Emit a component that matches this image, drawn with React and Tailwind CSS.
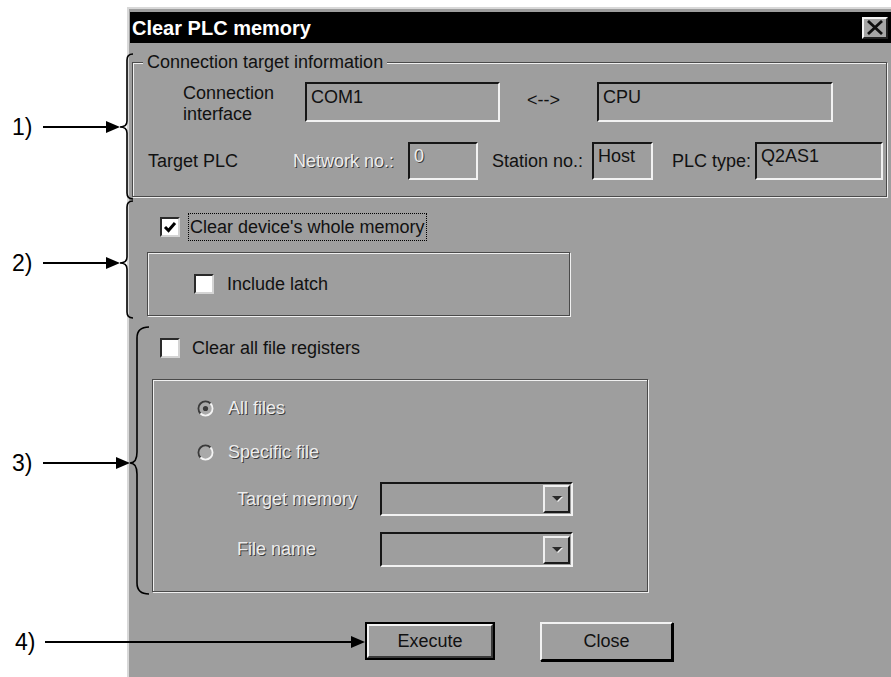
import React from "react";

// Win9x-style dialog pieces
const DIS = "text-[#ededed] [text-shadow:1px_1px_0_#3c3c3c]";

function Sunken({ className = "", children }) {
  return (
    <div
      className={
        "border-2 border-t-[#161616] border-l-[#161616] border-b-[#f2f2f2] border-r-[#f2f2f2] " +
        className
      }
    >
      {children}
    </div>
  );
}

function Checkbox({ checked = false }) {
  return (
    <div className="w-[20px] h-[20px] shrink-0 bg-white border-2 border-t-[#2a2a2a] border-l-[#2a2a2a] border-b-[#d4d4d4] border-r-[#d4d4d4] flex items-center justify-center">
      {checked && (
        <svg width="14" height="14" viewBox="0 0 14 14">
          <path d="M2 7 L5.5 10.5 L12 3" fill="none" stroke="#000" strokeWidth="3" />
        </svg>
      )}
    </div>
  );
}

function Radio({ selected = false }) {
  return (
    <svg width="17" height="17" viewBox="0 0 17 17" className="shrink-0">
      <circle cx="8.5" cy="8.5" r="7" fill="#a9a9a9" />
      <path d="M3.5 13.5 A7 7 0 0 1 13.5 3.5" fill="none" stroke="#3a3a3a" strokeWidth="1.8" />
      <path d="M13.5 3.5 A7 7 0 0 1 3.5 13.5" fill="none" stroke="#f4f4f4" strokeWidth="1.8" />
      {selected && <circle cx="8.5" cy="8.5" r="2.6" fill="#3a3a3a" />}
    </svg>
  );
}

function Combo({ className = "" }) {
  return (
    <Sunken className={"w-[193px] flex items-center justify-end pr-[1px] " + className}>
      <div className="w-[27px] h-[28px] bg-[#a4a4a4] border-2 border-t-[#f0f0f0] border-l-[#f0f0f0] border-b-[#1a1a1a] border-r-[#1a1a1a] flex items-center justify-center">
        <svg width="14" height="10" viewBox="0 0 14 10">
          <path d="M2 2 L12 2 L7 7 Z" fill="#f0f0f0" transform="translate(1 1)" />
          <path d="M2 2 L12 2 L7 7 Z" fill="#2a2a2a" />
        </svg>
      </div>
    </Sunken>
  );
}

function Brace({ top, mid, bottom, xv, xe, xt, r }) {
  const d = `M${xe},${top} Q${xv},${top} ${xv},${top + r} L${xv},${mid - r} Q${xv},${mid} ${xt},${mid} Q${xv},${mid} ${xv},${mid + r} L${xv},${bottom - r} Q${xv},${bottom} ${xe},${bottom}`;
  return <path d={d} fill="none" stroke="#000" strokeWidth="1.6" />;
}

function Arrow({ x1, x2, y }) {
  return (
    <g>
      <line x1={x1} y1={y} x2={x2 - 12} y2={y} stroke="#000" strokeWidth="2" />
      <polygon points={`${x2 - 14},${y - 6} ${x2},${y} ${x2 - 14},${y + 6}`} fill="#000" />
    </g>
  );
}

export default function App() {
  return (
    <div className="relative w-[891px] h-[677px] overflow-hidden bg-white font-['Liberation_Sans',Arial,sans-serif] text-[18px] leading-[21px] text-[#111]">
      {/* dialog window */}
      <div className="ml-[127px] mt-[7px] w-[764px] h-[670px] bg-[#9e9e9e] border-t-2 border-l-2 border-[#d8d8d8] pt-[3px] pl-[1px] flex flex-col">
        {/* title bar */}
        <div className="h-[31px] shrink-0 bg-black flex items-center justify-between pl-[2px] pr-[3px]">
          <span className="text-white font-bold text-[20px] leading-[24px] whitespace-nowrap">Clear PLC memory</span>
          <div className="w-[26px] h-[22px] bg-[#a6a6a6] border-2 border-t-[#f4f4f4] border-l-[#f4f4f4] border-b-[#222] border-r-[#222] flex items-center justify-center">
            <svg width="18" height="15" viewBox="0 0 18 15">
              <path d="M2 1 L16 14 M16 1 L2 14" stroke="#111" strokeWidth="2.8" />
            </svg>
          </div>
        </div>

        {/* connection target information */}
        <fieldset className="mt-[9px] ml-[2px] mr-[4px] border border-[#4a4a4a] shadow-[inset_1px_1px_0_#f0f0f0,1px_1px_0_#f0f0f0] pt-[10px] pb-[16px]">
          <legend className="ml-[10px] px-[4px] leading-[20px] bg-[#9e9e9e] whitespace-nowrap">Connection target information</legend>
          <div className="h-[40px] flex items-center">
            <div className="ml-[50px] w-[122px] leading-[21px] pt-[3px]">
              <div>Connection</div>
              <div>interface</div>
            </div>
            <Sunken className="w-[195px] h-[40px] pl-[4px] pt-[3px]">COM1</Sunken>
            <div className="w-[97px] pl-[27px] pb-[4px] whitespace-nowrap">&lt;--&gt;</div>
            <Sunken className="w-[236px] h-[40px] pl-[4px] pt-[3px]">CPU</Sunken>
          </div>
          <div className="mt-[20px] h-[38px] flex items-center whitespace-nowrap">
            <div className="ml-[15px] w-[145px]">Target PLC</div>
            <div className={"w-[115px] " + DIS}>Network no.:</div>
            <Sunken className={"w-[70px] h-[38px] pl-[4px] pt-[2px] " + DIS}>0</Sunken>
            <div className="ml-[14px] w-[100px]">Station no.:</div>
            <Sunken className="w-[61px] h-[38px] pl-[4px] pt-[2px]">Host</Sunken>
            <div className="ml-[19px] w-[83px]">PLC type:</div>
            <Sunken className="w-[128px] h-[38px] pl-[4px] pt-[2px]">Q2AS1</Sunken>
          </div>
        </fieldset>

        {/* device memory */}
        <div className="mt-[16px] h-[28px] flex items-center pl-[30px]">
          <Checkbox checked />
          <span className="ml-[8px] h-[28px] px-[1px] border border-dotted border-black flex items-center whitespace-nowrap">
            Clear device's whole memory
          </span>
        </div>
        <div className="mt-[11px] ml-[17px] w-[423px] h-[64px] shrink-0 border border-[#4a4a4a] shadow-[inset_1px_1px_0_#f0f0f0,1px_1px_0_#f0f0f0] flex items-center pl-[46px]">
          <Checkbox />
          <span className="ml-[13px] whitespace-nowrap">Include latch</span>
        </div>

        {/* file registers */}
        <div className="mt-[18px] h-[28px] flex items-center pl-[30px]">
          <Checkbox />
          <span className="ml-[12px] whitespace-nowrap">Clear all file registers</span>
        </div>
        <div className="mt-[17px] ml-[22px] w-[496px] h-[213px] shrink-0 border border-[#4a4a4a] shadow-[inset_1px_1px_0_#f0f0f0,1px_1px_0_#f0f0f0] flex flex-col pl-[44px] pt-[16px]">
          <div className="h-[24px] flex items-center">
            <Radio selected />
            <span className={"ml-[14px] " + DIS}>All files</span>
          </div>
          <div className="mt-[20px] h-[24px] flex items-center">
            <Radio />
            <span className={"ml-[14px] " + DIS}>Specific file</span>
          </div>
          <div className="mt-[18px] h-[34px] flex items-center">
            <div className={"ml-[40px] w-[143px] whitespace-nowrap " + DIS}>Target memory</div>
            <Combo className="h-[34px]" />
          </div>
          <div className="mt-[16px] h-[35px] flex items-center">
            <div className={"ml-[40px] w-[143px] whitespace-nowrap " + DIS}>File name</div>
            <Combo className="h-[35px]" />
          </div>
        </div>

        {/* buttons */}
        <div className="mt-[30px] ml-[235px] flex items-start">
          <div className="w-[130px] h-[38px] border-2 border-black">
            <div className="w-full h-full border-2 border-t-[#f2f2f2] border-l-[#f2f2f2] border-b-[#3a3a3a] border-r-[#3a3a3a] flex items-center justify-center">
              Execute
            </div>
          </div>
          <div className="ml-[45px] w-[133px] h-[39px] border-2 border-t-[#f2f2f2] border-l-[#f2f2f2] border-b-black border-r-black shadow-[1px_1px_0_#000] flex items-center justify-center">
            Close
          </div>
        </div>
      </div>

      {/* callouts */}
      <svg className="absolute left-0 top-0 pointer-events-none" width="891" height="677" viewBox="0 0 891 677">
        <Brace top={54} mid={127} bottom={199} xv={127} xe={133} xt={120} r={6} />
        <Brace top={201} mid={263} bottom={318} xv={127} xe={133} xt={120} r={6} />
        <Brace top={327} mid={463} bottom={594} xv={137} xe={149} xt={130} r={11} />
        <Arrow x1={43} x2={120} y={127} />
        <Arrow x1={43} x2={120} y={263} />
        <Arrow x1={43} x2={130} y={463} />
        <Arrow x1={45} x2={365} y={642} />
      </svg>
      <span className="absolute left-[12px] top-[115px] text-[23px] leading-[24px] text-black">1)</span>
      <span className="absolute left-[12px] top-[251px] text-[23px] leading-[24px] text-black">2)</span>
      <span className="absolute left-[12px] top-[451px] text-[23px] leading-[24px] text-black">3)</span>
      <span className="absolute left-[15px] top-[630px] text-[23px] leading-[24px] text-black">4)</span>
    </div>
  );
}
